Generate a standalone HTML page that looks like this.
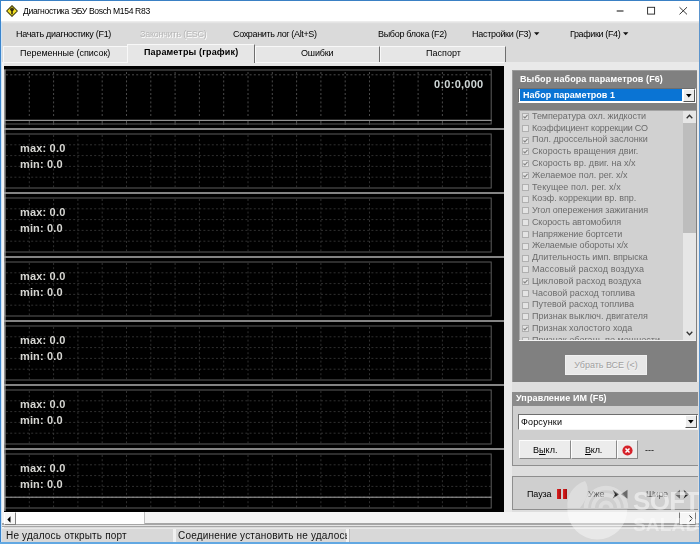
<!DOCTYPE html><html lang="ru"><head><meta charset="utf-8"><title>Диагностика ЭБУ Bosch M154 R83</title><style>
*{box-sizing:border-box;margin:0;padding:0}
html,body{width:700px;height:544px;overflow:hidden;background:#dadada}
body{position:relative;font-family:"Liberation Sans",sans-serif;font-size:9px;color:#000}
.a{position:absolute;white-space:nowrap}
.t{position:absolute;white-space:nowrap;line-height:1;will-change:transform}
#titlebar{left:0;top:0;width:700px;height:21px;background:#fff}
#title{left:23px;top:6.7px;font-size:8.6px}
.menu{top:30px;font-size:9px;color:#000}
.dis{color:#b8b8b8;text-shadow:0.7px 0.7px 0 #fff}
.tab span,.btn span{will-change:transform;display:inline-block}
.tab{top:46px;height:16px;border-top:1px solid #f8f8f8;border-left:1px solid #f8f8f8;border-right:1px solid #6e6e6e;background:#e6e6e6;text-align:center;font-size:9px;line-height:12.6px;color:#000}
.tab.sel{top:44px;height:19px;font-weight:bold;line-height:14px;z-index:2}
#chart{left:4px;top:66px;width:500px;height:446px;background:#000}
.mm{font-weight:bold;font-size:11px;color:#d6d6d2}
#rp1{left:512px;top:70.4px;width:185px;height:312.1px;background:#808080;border-left:1px solid #9c9c9c;border-top:1px solid #9a9a9a}
#rp2{left:512px;top:392px;width:186px;height:74.3px;background:#cfcfcf;border:1px solid #8e8e8e;border-right:0}
#rp3{left:512px;top:475.8px;width:186px;height:34.4px;background:#cfcfcf;border:1px solid #8e8e8e;border-right:0}
.hd{font-weight:bold;color:#fff;font-size:9px}
.li{color:#6c6c6c;font-size:9px}
.cb{width:7px;height:7px;background:#e4e4e4;border:1px solid #b0b0b0}
.btn{background:#ececec;border:1px solid #fdfdfd;border-right-color:#8a8a8a;border-bottom-color:#8a8a8a;text-align:center;font-size:9px}
</style></head><body>
<div class="a" id="titlebar"></div>
<div class="a" style="left:0;top:21px;width:700px;height:3px;background:linear-gradient(#f0f0f0,#d8d8d8)"></div>
<svg class="a" style="left:5.9px;top:4.6px" width="12" height="12" viewBox="0 0 13 13"><polygon points="6.5,0.7 12.3,6.5 6.5,12.3 0.7,6.5" fill="#f2e024" stroke="#3a3408" stroke-width="1.1"/><circle cx="6.5" cy="4.6" r="2" fill="#2a2408"/><circle cx="6.5" cy="4.2" r="0.7" fill="#6a5a10"/><rect x="5.7" y="5.5" width="1.6" height="4.6" fill="#2a2408"/></svg>
<div class="t" id="title" style="letter-spacing:-0.360px;">Диагностика ЭБУ Bosch M154 R83</div>
<svg class="a" style="left:600px;top:0" width="100" height="22" viewBox="0 0 100 22"><g stroke="#222" stroke-width="0.9" fill="none"><line x1="16.7" y1="11" x2="23.5" y2="11" stroke-width="1.1"/><rect x="47.6" y="7.3" width="7" height="6.8"/><line x1="79.5" y1="7.2" x2="87" y2="14.4"/><line x1="87" y1="7.2" x2="79.5" y2="14.4"/></g></svg>
<div class="t menu " id="m1" style="left:16.4px;letter-spacing:-0.296px;">Начать диагностику (F1)</div>
<div class="t menu dis" id="m2" style="left:140px;letter-spacing:-0.227px;">Закончить (ESC)</div>
<div class="t menu " id="m3" style="left:233.4px;letter-spacing:-0.357px;">Сохранить лог (Alt+S)</div>
<div class="t menu " id="m4" style="left:377.7px;letter-spacing:-0.300px;">Выбор блока (F2)</div>
<div class="t menu " id="m5" style="left:472px;letter-spacing:-0.293px;">Настройки (F3)</div>
<div class="t menu " id="m6" style="left:569.7px;letter-spacing:-0.375px;">Графики (F4)</div>
<svg class="a" style="left:533.5px;top:32px" width="6" height="4"><polygon points="0,0.3 5.4,0.3 2.7,3.3" fill="#111"/></svg>
<svg class="a" style="left:622.6px;top:32px" width="6" height="4"><polygon points="0,0.3 5.4,0.3 2.7,3.3" fill="#111"/></svg>
<div class="a" style="left:3px;top:62px;width:504px;height:4px;background:#e6e6e6;border-top:1px solid #f8f8f8"></div>
<div class="a tab" style="left:3px;width:124px;border-right:0"><span id="t1" style="letter-spacing:-0.011px;">Переменные (список)</span></div>
<div class="a tab sel" style="left:127px;width:128px"><span id="t2" style="letter-spacing:0.139px;">Параметры (график)</span></div>
<div class="a tab" style="left:255px;width:125px"><span id="t3" style="letter-spacing:-0.150px;">Ошибки</span></div>
<div class="a tab" style="left:380px;width:126px"><span id="t4" style="letter-spacing:0.029px;">Паспорт</span></div>
<div class="a" style="left:504px;top:62px;width:196px;height:450px;background:#e9e9e9"></div><div class="a" style="left:512px;top:382px;width:188px;height:130px;background:#dedede"></div>
<div class="a" style="left:1px;top:62px;width:3px;height:466px;background:#f4f4f4"></div>
<svg class="a" id="chart" width="500" height="446" viewBox="4 66 500 446"><rect x="4" y="66" width="500" height="446" fill="#000"/><g fill="none" stroke-width="1"><rect x="4.6" y="70" width="486.6" height="54" stroke="#5c5c5c"/><line x1="29.3" y1="72" x2="29.3" y2="118" stroke="#525252" stroke-width="0.9" stroke-dasharray="2 2.2"/><line x1="29.3" y1="121" x2="29.3" y2="125" stroke="#505050"/><line x1="53.6" y1="72" x2="53.6" y2="118" stroke="#525252" stroke-width="0.9" stroke-dasharray="2 2.2"/><line x1="53.6" y1="121" x2="53.6" y2="125" stroke="#505050"/><line x1="77.9" y1="72" x2="77.9" y2="118" stroke="#525252" stroke-width="0.9" stroke-dasharray="2 2.2"/><line x1="77.9" y1="121" x2="77.9" y2="125" stroke="#505050"/><line x1="102.2" y1="72" x2="102.2" y2="118" stroke="#525252" stroke-width="0.9" stroke-dasharray="2 2.2"/><line x1="102.2" y1="121" x2="102.2" y2="125" stroke="#505050"/><line x1="126.5" y1="72" x2="126.5" y2="118" stroke="#525252" stroke-width="0.9" stroke-dasharray="2 2.2"/><line x1="126.5" y1="121" x2="126.5" y2="125" stroke="#505050"/><line x1="150.8" y1="72" x2="150.8" y2="118" stroke="#525252" stroke-width="0.9" stroke-dasharray="2 2.2"/><line x1="150.8" y1="121" x2="150.8" y2="125" stroke="#505050"/><line x1="175.1" y1="72" x2="175.1" y2="118" stroke="#525252" stroke-width="0.9" stroke-dasharray="2 2.2"/><line x1="175.1" y1="121" x2="175.1" y2="125" stroke="#505050"/><line x1="199.4" y1="72" x2="199.4" y2="118" stroke="#525252" stroke-width="0.9" stroke-dasharray="2 2.2"/><line x1="199.4" y1="121" x2="199.4" y2="125" stroke="#505050"/><line x1="223.7" y1="72" x2="223.7" y2="118" stroke="#525252" stroke-width="0.9" stroke-dasharray="2 2.2"/><line x1="223.7" y1="121" x2="223.7" y2="125" stroke="#505050"/><line x1="248.0" y1="72" x2="248.0" y2="118" stroke="#525252" stroke-width="0.9" stroke-dasharray="2 2.2"/><line x1="248.0" y1="121" x2="248.0" y2="125" stroke="#505050"/><line x1="272.3" y1="72" x2="272.3" y2="118" stroke="#525252" stroke-width="0.9" stroke-dasharray="2 2.2"/><line x1="272.3" y1="121" x2="272.3" y2="125" stroke="#505050"/><line x1="296.6" y1="72" x2="296.6" y2="118" stroke="#525252" stroke-width="0.9" stroke-dasharray="2 2.2"/><line x1="296.6" y1="121" x2="296.6" y2="125" stroke="#505050"/><line x1="320.9" y1="72" x2="320.9" y2="118" stroke="#525252" stroke-width="0.9" stroke-dasharray="2 2.2"/><line x1="320.9" y1="121" x2="320.9" y2="125" stroke="#505050"/><line x1="345.2" y1="72" x2="345.2" y2="118" stroke="#525252" stroke-width="0.9" stroke-dasharray="2 2.2"/><line x1="345.2" y1="121" x2="345.2" y2="125" stroke="#505050"/><line x1="369.5" y1="72" x2="369.5" y2="118" stroke="#525252" stroke-width="0.9" stroke-dasharray="2 2.2"/><line x1="369.5" y1="121" x2="369.5" y2="125" stroke="#505050"/><line x1="393.8" y1="72" x2="393.8" y2="118" stroke="#525252" stroke-width="0.9" stroke-dasharray="2 2.2"/><line x1="393.8" y1="121" x2="393.8" y2="125" stroke="#505050"/><line x1="418.1" y1="72" x2="418.1" y2="118" stroke="#525252" stroke-width="0.9" stroke-dasharray="2 2.2"/><line x1="418.1" y1="121" x2="418.1" y2="125" stroke="#505050"/><line x1="442.4" y1="72" x2="442.4" y2="118" stroke="#525252" stroke-width="0.9" stroke-dasharray="2 2.2"/><line x1="442.4" y1="121" x2="442.4" y2="125" stroke="#505050"/><line x1="466.7" y1="72" x2="466.7" y2="118" stroke="#525252" stroke-width="0.9" stroke-dasharray="2 2.2"/><line x1="466.7" y1="121" x2="466.7" y2="125" stroke="#505050"/><line x1="6" y1="74.8" x2="491" y2="74.8" stroke="#525252" stroke-width="0.9" stroke-dasharray="2 2.2"/><line x1="4" y1="120.3" x2="491.5" y2="120.3" stroke="#b4b4b4"/><line x1="4" y1="128.9" x2="504" y2="128.9" stroke="#b0b0b0" stroke-width="1.5"/><rect x="4.6" y="134.0" width="486.6" height="54" stroke="#5c5c5c"/><line x1="29.3" y1="135.0" x2="29.3" y2="188.0" stroke="#3c3c3c" stroke-width="0.8" stroke-dasharray="2 2.2"/><line x1="53.6" y1="135.0" x2="53.6" y2="188.0" stroke="#3c3c3c" stroke-width="0.8" stroke-dasharray="2 2.2"/><line x1="77.9" y1="135.0" x2="77.9" y2="188.0" stroke="#3c3c3c" stroke-width="0.8" stroke-dasharray="2 2.2"/><line x1="102.2" y1="135.0" x2="102.2" y2="188.0" stroke="#3c3c3c" stroke-width="0.8" stroke-dasharray="2 2.2"/><line x1="126.5" y1="135.0" x2="126.5" y2="188.0" stroke="#3c3c3c" stroke-width="0.8" stroke-dasharray="2 2.2"/><line x1="150.8" y1="135.0" x2="150.8" y2="188.0" stroke="#3c3c3c" stroke-width="0.8" stroke-dasharray="2 2.2"/><line x1="175.1" y1="135.0" x2="175.1" y2="188.0" stroke="#3c3c3c" stroke-width="0.8" stroke-dasharray="2 2.2"/><line x1="199.4" y1="135.0" x2="199.4" y2="188.0" stroke="#3c3c3c" stroke-width="0.8" stroke-dasharray="2 2.2"/><line x1="223.7" y1="135.0" x2="223.7" y2="188.0" stroke="#3c3c3c" stroke-width="0.8" stroke-dasharray="2 2.2"/><line x1="248.0" y1="135.0" x2="248.0" y2="188.0" stroke="#3c3c3c" stroke-width="0.8" stroke-dasharray="2 2.2"/><line x1="272.3" y1="135.0" x2="272.3" y2="188.0" stroke="#3c3c3c" stroke-width="0.8" stroke-dasharray="2 2.2"/><line x1="296.6" y1="135.0" x2="296.6" y2="188.0" stroke="#3c3c3c" stroke-width="0.8" stroke-dasharray="2 2.2"/><line x1="320.9" y1="135.0" x2="320.9" y2="188.0" stroke="#3c3c3c" stroke-width="0.8" stroke-dasharray="2 2.2"/><line x1="345.2" y1="135.0" x2="345.2" y2="188.0" stroke="#3c3c3c" stroke-width="0.8" stroke-dasharray="2 2.2"/><line x1="369.5" y1="135.0" x2="369.5" y2="188.0" stroke="#3c3c3c" stroke-width="0.8" stroke-dasharray="2 2.2"/><line x1="393.8" y1="135.0" x2="393.8" y2="188.0" stroke="#3c3c3c" stroke-width="0.8" stroke-dasharray="2 2.2"/><line x1="418.1" y1="135.0" x2="418.1" y2="188.0" stroke="#3c3c3c" stroke-width="0.8" stroke-dasharray="2 2.2"/><line x1="442.4" y1="135.0" x2="442.4" y2="188.0" stroke="#3c3c3c" stroke-width="0.8" stroke-dasharray="2 2.2"/><line x1="466.7" y1="135.0" x2="466.7" y2="188.0" stroke="#3c3c3c" stroke-width="0.8" stroke-dasharray="2 2.2"/><line x1="6" y1="144.8" x2="491" y2="144.8" stroke="#3c3c3c" stroke-width="0.8" stroke-dasharray="2 2.2"/><line x1="6" y1="155.6" x2="491" y2="155.6" stroke="#3c3c3c" stroke-width="0.8" stroke-dasharray="2 2.2"/><line x1="6" y1="166.4" x2="491" y2="166.4" stroke="#3c3c3c" stroke-width="0.8" stroke-dasharray="2 2.2"/><line x1="6" y1="177.2" x2="491" y2="177.2" stroke="#3c3c3c" stroke-width="0.8" stroke-dasharray="2 2.2"/><line x1="4" y1="192.9" x2="504" y2="192.9" stroke="#b0b0b0" stroke-width="1.5"/><rect x="4.6" y="198.0" width="486.6" height="54" stroke="#5c5c5c"/><line x1="29.3" y1="199.0" x2="29.3" y2="252.0" stroke="#3c3c3c" stroke-width="0.8" stroke-dasharray="2 2.2"/><line x1="53.6" y1="199.0" x2="53.6" y2="252.0" stroke="#3c3c3c" stroke-width="0.8" stroke-dasharray="2 2.2"/><line x1="77.9" y1="199.0" x2="77.9" y2="252.0" stroke="#3c3c3c" stroke-width="0.8" stroke-dasharray="2 2.2"/><line x1="102.2" y1="199.0" x2="102.2" y2="252.0" stroke="#3c3c3c" stroke-width="0.8" stroke-dasharray="2 2.2"/><line x1="126.5" y1="199.0" x2="126.5" y2="252.0" stroke="#3c3c3c" stroke-width="0.8" stroke-dasharray="2 2.2"/><line x1="150.8" y1="199.0" x2="150.8" y2="252.0" stroke="#3c3c3c" stroke-width="0.8" stroke-dasharray="2 2.2"/><line x1="175.1" y1="199.0" x2="175.1" y2="252.0" stroke="#3c3c3c" stroke-width="0.8" stroke-dasharray="2 2.2"/><line x1="199.4" y1="199.0" x2="199.4" y2="252.0" stroke="#3c3c3c" stroke-width="0.8" stroke-dasharray="2 2.2"/><line x1="223.7" y1="199.0" x2="223.7" y2="252.0" stroke="#3c3c3c" stroke-width="0.8" stroke-dasharray="2 2.2"/><line x1="248.0" y1="199.0" x2="248.0" y2="252.0" stroke="#3c3c3c" stroke-width="0.8" stroke-dasharray="2 2.2"/><line x1="272.3" y1="199.0" x2="272.3" y2="252.0" stroke="#3c3c3c" stroke-width="0.8" stroke-dasharray="2 2.2"/><line x1="296.6" y1="199.0" x2="296.6" y2="252.0" stroke="#3c3c3c" stroke-width="0.8" stroke-dasharray="2 2.2"/><line x1="320.9" y1="199.0" x2="320.9" y2="252.0" stroke="#3c3c3c" stroke-width="0.8" stroke-dasharray="2 2.2"/><line x1="345.2" y1="199.0" x2="345.2" y2="252.0" stroke="#3c3c3c" stroke-width="0.8" stroke-dasharray="2 2.2"/><line x1="369.5" y1="199.0" x2="369.5" y2="252.0" stroke="#3c3c3c" stroke-width="0.8" stroke-dasharray="2 2.2"/><line x1="393.8" y1="199.0" x2="393.8" y2="252.0" stroke="#3c3c3c" stroke-width="0.8" stroke-dasharray="2 2.2"/><line x1="418.1" y1="199.0" x2="418.1" y2="252.0" stroke="#3c3c3c" stroke-width="0.8" stroke-dasharray="2 2.2"/><line x1="442.4" y1="199.0" x2="442.4" y2="252.0" stroke="#3c3c3c" stroke-width="0.8" stroke-dasharray="2 2.2"/><line x1="466.7" y1="199.0" x2="466.7" y2="252.0" stroke="#3c3c3c" stroke-width="0.8" stroke-dasharray="2 2.2"/><line x1="6" y1="208.8" x2="491" y2="208.8" stroke="#3c3c3c" stroke-width="0.8" stroke-dasharray="2 2.2"/><line x1="6" y1="219.6" x2="491" y2="219.6" stroke="#3c3c3c" stroke-width="0.8" stroke-dasharray="2 2.2"/><line x1="6" y1="230.4" x2="491" y2="230.4" stroke="#3c3c3c" stroke-width="0.8" stroke-dasharray="2 2.2"/><line x1="6" y1="241.2" x2="491" y2="241.2" stroke="#3c3c3c" stroke-width="0.8" stroke-dasharray="2 2.2"/><line x1="4" y1="256.9" x2="504" y2="256.9" stroke="#b0b0b0" stroke-width="1.5"/><rect x="4.6" y="262.0" width="486.6" height="54" stroke="#5c5c5c"/><line x1="29.3" y1="263.0" x2="29.3" y2="316.0" stroke="#3c3c3c" stroke-width="0.8" stroke-dasharray="2 2.2"/><line x1="53.6" y1="263.0" x2="53.6" y2="316.0" stroke="#3c3c3c" stroke-width="0.8" stroke-dasharray="2 2.2"/><line x1="77.9" y1="263.0" x2="77.9" y2="316.0" stroke="#3c3c3c" stroke-width="0.8" stroke-dasharray="2 2.2"/><line x1="102.2" y1="263.0" x2="102.2" y2="316.0" stroke="#3c3c3c" stroke-width="0.8" stroke-dasharray="2 2.2"/><line x1="126.5" y1="263.0" x2="126.5" y2="316.0" stroke="#3c3c3c" stroke-width="0.8" stroke-dasharray="2 2.2"/><line x1="150.8" y1="263.0" x2="150.8" y2="316.0" stroke="#3c3c3c" stroke-width="0.8" stroke-dasharray="2 2.2"/><line x1="175.1" y1="263.0" x2="175.1" y2="316.0" stroke="#3c3c3c" stroke-width="0.8" stroke-dasharray="2 2.2"/><line x1="199.4" y1="263.0" x2="199.4" y2="316.0" stroke="#3c3c3c" stroke-width="0.8" stroke-dasharray="2 2.2"/><line x1="223.7" y1="263.0" x2="223.7" y2="316.0" stroke="#3c3c3c" stroke-width="0.8" stroke-dasharray="2 2.2"/><line x1="248.0" y1="263.0" x2="248.0" y2="316.0" stroke="#3c3c3c" stroke-width="0.8" stroke-dasharray="2 2.2"/><line x1="272.3" y1="263.0" x2="272.3" y2="316.0" stroke="#3c3c3c" stroke-width="0.8" stroke-dasharray="2 2.2"/><line x1="296.6" y1="263.0" x2="296.6" y2="316.0" stroke="#3c3c3c" stroke-width="0.8" stroke-dasharray="2 2.2"/><line x1="320.9" y1="263.0" x2="320.9" y2="316.0" stroke="#3c3c3c" stroke-width="0.8" stroke-dasharray="2 2.2"/><line x1="345.2" y1="263.0" x2="345.2" y2="316.0" stroke="#3c3c3c" stroke-width="0.8" stroke-dasharray="2 2.2"/><line x1="369.5" y1="263.0" x2="369.5" y2="316.0" stroke="#3c3c3c" stroke-width="0.8" stroke-dasharray="2 2.2"/><line x1="393.8" y1="263.0" x2="393.8" y2="316.0" stroke="#3c3c3c" stroke-width="0.8" stroke-dasharray="2 2.2"/><line x1="418.1" y1="263.0" x2="418.1" y2="316.0" stroke="#3c3c3c" stroke-width="0.8" stroke-dasharray="2 2.2"/><line x1="442.4" y1="263.0" x2="442.4" y2="316.0" stroke="#3c3c3c" stroke-width="0.8" stroke-dasharray="2 2.2"/><line x1="466.7" y1="263.0" x2="466.7" y2="316.0" stroke="#3c3c3c" stroke-width="0.8" stroke-dasharray="2 2.2"/><line x1="6" y1="272.8" x2="491" y2="272.8" stroke="#3c3c3c" stroke-width="0.8" stroke-dasharray="2 2.2"/><line x1="6" y1="283.6" x2="491" y2="283.6" stroke="#3c3c3c" stroke-width="0.8" stroke-dasharray="2 2.2"/><line x1="6" y1="294.4" x2="491" y2="294.4" stroke="#3c3c3c" stroke-width="0.8" stroke-dasharray="2 2.2"/><line x1="6" y1="305.2" x2="491" y2="305.2" stroke="#3c3c3c" stroke-width="0.8" stroke-dasharray="2 2.2"/><line x1="4" y1="320.9" x2="504" y2="320.9" stroke="#b0b0b0" stroke-width="1.5"/><rect x="4.6" y="326.0" width="486.6" height="54" stroke="#5c5c5c"/><line x1="29.3" y1="327.0" x2="29.3" y2="380.0" stroke="#3c3c3c" stroke-width="0.8" stroke-dasharray="2 2.2"/><line x1="53.6" y1="327.0" x2="53.6" y2="380.0" stroke="#3c3c3c" stroke-width="0.8" stroke-dasharray="2 2.2"/><line x1="77.9" y1="327.0" x2="77.9" y2="380.0" stroke="#3c3c3c" stroke-width="0.8" stroke-dasharray="2 2.2"/><line x1="102.2" y1="327.0" x2="102.2" y2="380.0" stroke="#3c3c3c" stroke-width="0.8" stroke-dasharray="2 2.2"/><line x1="126.5" y1="327.0" x2="126.5" y2="380.0" stroke="#3c3c3c" stroke-width="0.8" stroke-dasharray="2 2.2"/><line x1="150.8" y1="327.0" x2="150.8" y2="380.0" stroke="#3c3c3c" stroke-width="0.8" stroke-dasharray="2 2.2"/><line x1="175.1" y1="327.0" x2="175.1" y2="380.0" stroke="#3c3c3c" stroke-width="0.8" stroke-dasharray="2 2.2"/><line x1="199.4" y1="327.0" x2="199.4" y2="380.0" stroke="#3c3c3c" stroke-width="0.8" stroke-dasharray="2 2.2"/><line x1="223.7" y1="327.0" x2="223.7" y2="380.0" stroke="#3c3c3c" stroke-width="0.8" stroke-dasharray="2 2.2"/><line x1="248.0" y1="327.0" x2="248.0" y2="380.0" stroke="#3c3c3c" stroke-width="0.8" stroke-dasharray="2 2.2"/><line x1="272.3" y1="327.0" x2="272.3" y2="380.0" stroke="#3c3c3c" stroke-width="0.8" stroke-dasharray="2 2.2"/><line x1="296.6" y1="327.0" x2="296.6" y2="380.0" stroke="#3c3c3c" stroke-width="0.8" stroke-dasharray="2 2.2"/><line x1="320.9" y1="327.0" x2="320.9" y2="380.0" stroke="#3c3c3c" stroke-width="0.8" stroke-dasharray="2 2.2"/><line x1="345.2" y1="327.0" x2="345.2" y2="380.0" stroke="#3c3c3c" stroke-width="0.8" stroke-dasharray="2 2.2"/><line x1="369.5" y1="327.0" x2="369.5" y2="380.0" stroke="#3c3c3c" stroke-width="0.8" stroke-dasharray="2 2.2"/><line x1="393.8" y1="327.0" x2="393.8" y2="380.0" stroke="#3c3c3c" stroke-width="0.8" stroke-dasharray="2 2.2"/><line x1="418.1" y1="327.0" x2="418.1" y2="380.0" stroke="#3c3c3c" stroke-width="0.8" stroke-dasharray="2 2.2"/><line x1="442.4" y1="327.0" x2="442.4" y2="380.0" stroke="#3c3c3c" stroke-width="0.8" stroke-dasharray="2 2.2"/><line x1="466.7" y1="327.0" x2="466.7" y2="380.0" stroke="#3c3c3c" stroke-width="0.8" stroke-dasharray="2 2.2"/><line x1="6" y1="336.8" x2="491" y2="336.8" stroke="#3c3c3c" stroke-width="0.8" stroke-dasharray="2 2.2"/><line x1="6" y1="347.6" x2="491" y2="347.6" stroke="#3c3c3c" stroke-width="0.8" stroke-dasharray="2 2.2"/><line x1="6" y1="358.4" x2="491" y2="358.4" stroke="#3c3c3c" stroke-width="0.8" stroke-dasharray="2 2.2"/><line x1="6" y1="369.2" x2="491" y2="369.2" stroke="#3c3c3c" stroke-width="0.8" stroke-dasharray="2 2.2"/><line x1="4" y1="384.9" x2="504" y2="384.9" stroke="#b0b0b0" stroke-width="1.5"/><rect x="4.6" y="390.0" width="486.6" height="54" stroke="#5c5c5c"/><line x1="29.3" y1="391.0" x2="29.3" y2="444.0" stroke="#3c3c3c" stroke-width="0.8" stroke-dasharray="2 2.2"/><line x1="53.6" y1="391.0" x2="53.6" y2="444.0" stroke="#3c3c3c" stroke-width="0.8" stroke-dasharray="2 2.2"/><line x1="77.9" y1="391.0" x2="77.9" y2="444.0" stroke="#3c3c3c" stroke-width="0.8" stroke-dasharray="2 2.2"/><line x1="102.2" y1="391.0" x2="102.2" y2="444.0" stroke="#3c3c3c" stroke-width="0.8" stroke-dasharray="2 2.2"/><line x1="126.5" y1="391.0" x2="126.5" y2="444.0" stroke="#3c3c3c" stroke-width="0.8" stroke-dasharray="2 2.2"/><line x1="150.8" y1="391.0" x2="150.8" y2="444.0" stroke="#3c3c3c" stroke-width="0.8" stroke-dasharray="2 2.2"/><line x1="175.1" y1="391.0" x2="175.1" y2="444.0" stroke="#3c3c3c" stroke-width="0.8" stroke-dasharray="2 2.2"/><line x1="199.4" y1="391.0" x2="199.4" y2="444.0" stroke="#3c3c3c" stroke-width="0.8" stroke-dasharray="2 2.2"/><line x1="223.7" y1="391.0" x2="223.7" y2="444.0" stroke="#3c3c3c" stroke-width="0.8" stroke-dasharray="2 2.2"/><line x1="248.0" y1="391.0" x2="248.0" y2="444.0" stroke="#3c3c3c" stroke-width="0.8" stroke-dasharray="2 2.2"/><line x1="272.3" y1="391.0" x2="272.3" y2="444.0" stroke="#3c3c3c" stroke-width="0.8" stroke-dasharray="2 2.2"/><line x1="296.6" y1="391.0" x2="296.6" y2="444.0" stroke="#3c3c3c" stroke-width="0.8" stroke-dasharray="2 2.2"/><line x1="320.9" y1="391.0" x2="320.9" y2="444.0" stroke="#3c3c3c" stroke-width="0.8" stroke-dasharray="2 2.2"/><line x1="345.2" y1="391.0" x2="345.2" y2="444.0" stroke="#3c3c3c" stroke-width="0.8" stroke-dasharray="2 2.2"/><line x1="369.5" y1="391.0" x2="369.5" y2="444.0" stroke="#3c3c3c" stroke-width="0.8" stroke-dasharray="2 2.2"/><line x1="393.8" y1="391.0" x2="393.8" y2="444.0" stroke="#3c3c3c" stroke-width="0.8" stroke-dasharray="2 2.2"/><line x1="418.1" y1="391.0" x2="418.1" y2="444.0" stroke="#3c3c3c" stroke-width="0.8" stroke-dasharray="2 2.2"/><line x1="442.4" y1="391.0" x2="442.4" y2="444.0" stroke="#3c3c3c" stroke-width="0.8" stroke-dasharray="2 2.2"/><line x1="466.7" y1="391.0" x2="466.7" y2="444.0" stroke="#3c3c3c" stroke-width="0.8" stroke-dasharray="2 2.2"/><line x1="6" y1="400.8" x2="491" y2="400.8" stroke="#3c3c3c" stroke-width="0.8" stroke-dasharray="2 2.2"/><line x1="6" y1="411.6" x2="491" y2="411.6" stroke="#3c3c3c" stroke-width="0.8" stroke-dasharray="2 2.2"/><line x1="6" y1="422.4" x2="491" y2="422.4" stroke="#3c3c3c" stroke-width="0.8" stroke-dasharray="2 2.2"/><line x1="6" y1="433.2" x2="491" y2="433.2" stroke="#3c3c3c" stroke-width="0.8" stroke-dasharray="2 2.2"/><line x1="4" y1="448.9" x2="504" y2="448.9" stroke="#b0b0b0" stroke-width="1.5"/><rect x="4.6" y="454.0" width="486.6" height="54" stroke="#5c5c5c"/><line x1="29.3" y1="455.0" x2="29.3" y2="508.0" stroke="#3c3c3c" stroke-width="0.8" stroke-dasharray="2 2.2"/><line x1="53.6" y1="455.0" x2="53.6" y2="508.0" stroke="#3c3c3c" stroke-width="0.8" stroke-dasharray="2 2.2"/><line x1="77.9" y1="455.0" x2="77.9" y2="508.0" stroke="#3c3c3c" stroke-width="0.8" stroke-dasharray="2 2.2"/><line x1="102.2" y1="455.0" x2="102.2" y2="508.0" stroke="#3c3c3c" stroke-width="0.8" stroke-dasharray="2 2.2"/><line x1="126.5" y1="455.0" x2="126.5" y2="508.0" stroke="#3c3c3c" stroke-width="0.8" stroke-dasharray="2 2.2"/><line x1="150.8" y1="455.0" x2="150.8" y2="508.0" stroke="#3c3c3c" stroke-width="0.8" stroke-dasharray="2 2.2"/><line x1="175.1" y1="455.0" x2="175.1" y2="508.0" stroke="#3c3c3c" stroke-width="0.8" stroke-dasharray="2 2.2"/><line x1="199.4" y1="455.0" x2="199.4" y2="508.0" stroke="#3c3c3c" stroke-width="0.8" stroke-dasharray="2 2.2"/><line x1="223.7" y1="455.0" x2="223.7" y2="508.0" stroke="#3c3c3c" stroke-width="0.8" stroke-dasharray="2 2.2"/><line x1="248.0" y1="455.0" x2="248.0" y2="508.0" stroke="#3c3c3c" stroke-width="0.8" stroke-dasharray="2 2.2"/><line x1="272.3" y1="455.0" x2="272.3" y2="508.0" stroke="#3c3c3c" stroke-width="0.8" stroke-dasharray="2 2.2"/><line x1="296.6" y1="455.0" x2="296.6" y2="508.0" stroke="#3c3c3c" stroke-width="0.8" stroke-dasharray="2 2.2"/><line x1="320.9" y1="455.0" x2="320.9" y2="508.0" stroke="#3c3c3c" stroke-width="0.8" stroke-dasharray="2 2.2"/><line x1="345.2" y1="455.0" x2="345.2" y2="508.0" stroke="#3c3c3c" stroke-width="0.8" stroke-dasharray="2 2.2"/><line x1="369.5" y1="455.0" x2="369.5" y2="508.0" stroke="#3c3c3c" stroke-width="0.8" stroke-dasharray="2 2.2"/><line x1="393.8" y1="455.0" x2="393.8" y2="508.0" stroke="#3c3c3c" stroke-width="0.8" stroke-dasharray="2 2.2"/><line x1="418.1" y1="455.0" x2="418.1" y2="508.0" stroke="#3c3c3c" stroke-width="0.8" stroke-dasharray="2 2.2"/><line x1="442.4" y1="455.0" x2="442.4" y2="508.0" stroke="#3c3c3c" stroke-width="0.8" stroke-dasharray="2 2.2"/><line x1="466.7" y1="455.0" x2="466.7" y2="508.0" stroke="#3c3c3c" stroke-width="0.8" stroke-dasharray="2 2.2"/><line x1="6" y1="464.8" x2="491" y2="464.8" stroke="#3c3c3c" stroke-width="0.8" stroke-dasharray="2 2.2"/><line x1="6" y1="475.6" x2="491" y2="475.6" stroke="#3c3c3c" stroke-width="0.8" stroke-dasharray="2 2.2"/><line x1="6" y1="486.4" x2="491" y2="486.4" stroke="#3c3c3c" stroke-width="0.8" stroke-dasharray="2 2.2"/><line x1="6" y1="497.2" x2="491" y2="497.2" stroke="#3c3c3c" stroke-width="0.8" stroke-dasharray="2 2.2"/><line x1="4.9" y1="69.5" x2="4.9" y2="511" stroke="#a4a4a4" stroke-width="1.3"/><line x1="4" y1="497.2" x2="491.5" y2="497.2" stroke="#a8a8a8"/></g></svg>
<div class="t" id="time" style="left:433.5px;top:78.7px;font-weight:bold;font-size:11px;color:#d0d8d8;letter-spacing:0.267px;">0:0:0,000</div>
<div class="t mm" id="mx" style="left:19.9px;top:143px;letter-spacing:0.175px;">max: 0.0</div>
<div class="t mm" id="mn" style="left:19.9px;top:159px;letter-spacing:0.138px;">min: 0.0</div>
<div class="t mm"  style="left:19.9px;top:207px;letter-spacing:0.175px;">max: 0.0</div>
<div class="t mm"  style="left:19.9px;top:223px;letter-spacing:0.138px;">min: 0.0</div>
<div class="t mm"  style="left:19.9px;top:271px;letter-spacing:0.175px;">max: 0.0</div>
<div class="t mm"  style="left:19.9px;top:287px;letter-spacing:0.138px;">min: 0.0</div>
<div class="t mm"  style="left:19.9px;top:335px;letter-spacing:0.175px;">max: 0.0</div>
<div class="t mm"  style="left:19.9px;top:351px;letter-spacing:0.138px;">min: 0.0</div>
<div class="t mm"  style="left:19.9px;top:399px;letter-spacing:0.175px;">max: 0.0</div>
<div class="t mm"  style="left:19.9px;top:415px;letter-spacing:0.138px;">min: 0.0</div>
<div class="t mm"  style="left:19.9px;top:463px;letter-spacing:0.175px;">max: 0.0</div>
<div class="t mm"  style="left:19.9px;top:479px;letter-spacing:0.138px;">min: 0.0</div>
<div class="a" id="rp1"></div>
<div class="t hd" id="h1" style="left:520px;top:75px;letter-spacing:0.100px;">Выбор набора параметров (F6)</div>
<div class="a" style="left:518px;top:88px;width:178px;height:15px;background:#fff;border:1px solid #6e6e6e;border-bottom-color:#fff;border-right-color:#fff"></div>
<div class="a" style="left:520px;top:89.3px;width:162px;height:12px;background:#0a74d4"></div>
<div class="t" id="c1" style="left:523px;top:91px;font-weight:bold;color:#fff;font-size:9px;letter-spacing:0.028px;">Набор параметров 1</div>
<div class="a" style="left:682.5px;top:89.3px;width:12px;height:12.5px;background:#ececec;border:1px solid #fff;border-right-color:#555;border-bottom-color:#555"></div>
<svg class="a" style="left:685.5px;top:94px" width="6" height="4"><polygon points="0,0 5.6,0 2.8,3.4" fill="#000"/></svg>
<div class="a" style="left:519px;top:110px;width:177px;height:230px;background:#d1d1d1;border:1px solid #a4a4a4;border-right:0;border-bottom:0"></div>
<div class="a" style="left:683px;top:111px;width:13px;height:229px;background:#e6e6e6"></div>
<div class="a" style="left:683px;top:123px;width:13px;height:110px;background:#bdbdbd"></div>
<svg class="a" style="left:686px;top:114px" width="8" height="5"><polyline points="0.7,4.2 3.5,1.2 6.3,4.2" fill="none" stroke="#333" stroke-width="1.3"/></svg>
<svg class="a" style="left:686px;top:331px" width="8" height="5"><polyline points="0.7,0.8 3.5,3.8 6.3,0.8" fill="none" stroke="#333" stroke-width="1.3"/></svg>
<div class="a" style="left:520px;top:111px;width:163px;height:229px;overflow:hidden">
<div class="a cb" style="left:1.8px;top:2.1px"></div>
<svg class="a" style="left:1.8px;top:2.1px" width="7" height="7"><polyline points="1.5,3.5 2.9,5 5.5,1.9" fill="none" stroke="#808080" stroke-width="1.1"/></svg>
<div class="t li" id="li0" style="left:12px;top:0.8px;letter-spacing:-0.068px;">Температура охл. жидкости</div>
<div class="a cb" style="left:1.8px;top:13.9px"></div>
<div class="t li" id="li1" style="left:12px;top:12.6px;letter-spacing:-0.196px;">Коэффициент коррекции СО</div>
<div class="a cb" style="left:1.8px;top:25.7px"></div>
<svg class="a" style="left:1.8px;top:25.7px" width="7" height="7"><polyline points="1.5,3.5 2.9,5 5.5,1.9" fill="none" stroke="#808080" stroke-width="1.1"/></svg>
<div class="t li" id="li2" style="left:12px;top:24.4px;letter-spacing:-0.004px;">Пол. дроссельной заслонки</div>
<div class="a cb" style="left:1.8px;top:37.4px"></div>
<svg class="a" style="left:1.8px;top:37.4px" width="7" height="7"><polyline points="1.5,3.5 2.9,5 5.5,1.9" fill="none" stroke="#808080" stroke-width="1.1"/></svg>
<div class="t li" id="li3" style="left:12px;top:36.1px;letter-spacing:0.030px;">Скорость вращения двиг.</div>
<div class="a cb" style="left:1.8px;top:49.2px"></div>
<svg class="a" style="left:1.8px;top:49.2px" width="7" height="7"><polyline points="1.5,3.5 2.9,5 5.5,1.9" fill="none" stroke="#808080" stroke-width="1.1"/></svg>
<div class="t li" id="li4" style="left:12px;top:47.9px;letter-spacing:0.052px;">Скорость вр. двиг. на х/х</div>
<div class="a cb" style="left:1.8px;top:61.0px"></div>
<svg class="a" style="left:1.8px;top:61.0px" width="7" height="7"><polyline points="1.5,3.5 2.9,5 5.5,1.9" fill="none" stroke="#808080" stroke-width="1.1"/></svg>
<div class="t li" id="li5" style="left:12px;top:59.7px;letter-spacing:0.000px;">Желаемое пол. рег. х/х</div>
<div class="a cb" style="left:1.8px;top:72.8px"></div>
<div class="t li" id="li6" style="left:12px;top:71.5px;letter-spacing:0.086px;">Текущее пол. рег. х/х</div>
<div class="a cb" style="left:1.8px;top:84.6px"></div>
<div class="t li" id="li7" style="left:12px;top:83.3px;letter-spacing:-0.029px;">Коэф. коррекции вр. впр.</div>
<div class="a cb" style="left:1.8px;top:96.3px"></div>
<div class="t li" id="li8" style="left:12px;top:95.0px;letter-spacing:-0.052px;">Угол опережения зажигания</div>
<div class="a cb" style="left:1.8px;top:108.1px"></div>
<div class="t li" id="li9" style="left:12px;top:106.8px;letter-spacing:-0.132px;">Скорость автомобиля</div>
<div class="a cb" style="left:1.8px;top:119.9px"></div>
<div class="t li" id="li10" style="left:12px;top:118.6px;letter-spacing:-0.100px;">Напряжение бортсети</div>
<div class="a cb" style="left:1.8px;top:131.7px"></div>
<div class="t li" id="li11" style="left:12px;top:130.4px;letter-spacing:-0.095px;">Желаемые обороты х/х</div>
<div class="a cb" style="left:1.8px;top:143.5px"></div>
<div class="t li" id="li12" style="left:12px;top:142.2px;letter-spacing:-0.036px;">Длительность имп. впрыска</div>
<div class="a cb" style="left:1.8px;top:155.2px"></div>
<div class="t li" id="li13" style="left:12px;top:153.9px;letter-spacing:0.113px;">Массовый расход воздуха</div>
<div class="a cb" style="left:1.8px;top:167.0px"></div>
<svg class="a" style="left:1.8px;top:167.0px" width="7" height="7"><polyline points="1.5,3.5 2.9,5 5.5,1.9" fill="none" stroke="#808080" stroke-width="1.1"/></svg>
<div class="t li" id="li14" style="left:12px;top:165.7px;letter-spacing:0.087px;">Цикловой расход воздуха</div>
<div class="a cb" style="left:1.8px;top:178.8px"></div>
<div class="t li" id="li15" style="left:12px;top:177.5px;letter-spacing:-0.009px;">Часовой расход топлива</div>
<div class="a cb" style="left:1.8px;top:190.6px"></div>
<div class="t li" id="li16" style="left:12px;top:189.3px;letter-spacing:-0.027px;">Путевой расход топлива</div>
<div class="a cb" style="left:1.8px;top:202.4px"></div>
<div class="t li" id="li17" style="left:12px;top:201.1px;letter-spacing:0.008px;">Признак выключ. двигателя</div>
<div class="a cb" style="left:1.8px;top:214.1px"></div>
<svg class="a" style="left:1.8px;top:214.1px" width="7" height="7"><polyline points="1.5,3.5 2.9,5 5.5,1.9" fill="none" stroke="#808080" stroke-width="1.1"/></svg>
<div class="t li" id="li18" style="left:12px;top:212.8px;letter-spacing:0.009px;">Признак холостого хода</div>
<div class="a cb" style="left:1.8px;top:225.9px"></div>
<div class="t li" id="li19" style="left:12px;top:224.6px;letter-spacing:0.026px;">Признак обогащ. по мощности</div>
</div>
<div class="a" style="left:519px;top:339.6px;width:177px;height:1.2px;background:#f2f2f2"></div>
<div class="a" style="left:565px;top:355px;width:82px;height:19.5px;background:#e8e8e8;border:1px solid #f0f0f0;text-align:center;line-height:18.6px;font-size:9px;color:#a0a0a0;text-shadow:0.6px 0.6px 0 #f4f4f4"><span id="b1" style="letter-spacing:-0.029px;">Убрать ВСЕ (&lt;)</span></div>
<div class="a" id="rp2"></div>
<div class="a" style="left:512px;top:392.3px;width:186px;height:14.2px;background:#8a8a8a"></div>
<div class="t hd" id="h2" style="left:516px;top:394.2px;letter-spacing:0.111px;">Управление ИМ (F5)</div>
<div class="a" style="left:518px;top:414px;width:180px;height:16px;background:#fff;border:1px solid #6e6e6e;border-bottom-color:#f4f4f4;border-right:0"></div>
<div class="t" id="c2" style="left:521px;top:417.5px;font-size:9px;letter-spacing:0.163px;">Форсунки</div>
<div class="a" style="left:684.5px;top:415.3px;width:12.5px;height:13px;background:#ececec;border:1px solid #fff;border-right-color:#555;border-bottom-color:#555"></div>
<svg class="a" style="left:688px;top:420px" width="6" height="4"><polygon points="0,0 5.6,0 2.8,3.4" fill="#000"/></svg>
<div class="a btn" style="left:519px;top:440.4px;width:51.5px;height:18.6px;line-height:18px"><span id="b2" style="letter-spacing:0.040px;">В<u>ы</u>кл.</span></div>
<div class="a btn" style="left:570.5px;top:440.4px;width:46px;height:18.6px;line-height:18px"><span id="b3" style="letter-spacing:-0.150px;"><u>В</u>кл.</span></div>
<div class="a btn" style="left:616.5px;top:440.4px;width:21.5px;height:18.6px"></div>
<svg class="a" style="left:622px;top:445px" width="11" height="11" viewBox="0 0 11 11"><circle cx="5.5" cy="5.5" r="5.1" fill="#d6222a"/><path d="M3.5 3.5 L7.5 7.5 M7.5 3.5 L3.5 7.5" stroke="#fff" stroke-width="1.5" fill="none"/></svg>
<div class="t" style="left:645px;top:446px;font-size:9px">---</div>
<div class="a" id="rp3"></div>
<div class="t" id="p1" style="left:527.3px;top:489.9px;font-size:9px;letter-spacing:-0.100px;">Пауза</div>
<div class="a" style="left:557.4px;top:488.6px;width:3.8px;height:10.3px;background:linear-gradient(90deg,#e02020,#a00c0c)"></div>
<div class="a" style="left:563px;top:488.6px;width:3.8px;height:10.3px;background:linear-gradient(90deg,#e02020,#a00c0c)"></div>
<div class="t" id="p2" style="left:588px;top:489.9px;font-size:9px;color:#5a5a5a;letter-spacing:0.067px;">Уже</div>
<svg class="a" style="left:612px;top:488.5px" width="16" height="11"><polygon points="0.5,0.8 7,5.3 0.5,9.8 3,5.3" fill="#2a2a2a"/><polygon points="15.5,0.8 9,5.3 15.5,9.8" fill="#6a6a6a"/></svg>
<div class="t" id="p3" style="left:645.7px;top:489.9px;font-size:9px;color:#5a5a5a;letter-spacing:-0.400px;">Шире</div>
<svg class="a" style="left:674px;top:488.5px" width="16" height="11"><polygon points="6,0.8 0.5,5.3 6,9.8" fill="#6a6a6a"/><polygon points="9.5,0.8 15,5.3 9.5,9.8 11.5,5.3" fill="#2a2a2a"/></svg>
<div class="a" style="left:1px;top:511.5px;width:698px;height:13px;background:#f3f3f3"></div>
<div class="a" style="left:1px;top:523.3px;width:698px;height:1.5px;background:#a6a6a6"></div>
<div class="a" style="left:1px;top:524.8px;width:698px;height:1.4px;background:#e6e6e6"></div>
<div class="a" style="left:1px;top:526.1px;width:698px;height:1.4px;background:#a6a6a6"></div>
<div class="a" style="left:1px;top:527.5px;width:698px;height:1.5px;background:#e8e8e8"></div>
<div class="a" style="left:4px;top:512.4px;width:11.6px;height:12.2px;background:#f6f6f6;border:1px solid #fff;border-right-color:#808080;border-bottom-color:#808080"></div>
<svg class="a" style="left:7px;top:515.5px" width="4" height="7"><polygon points="3.5,0.3 0.3,3.5 3.5,6.7" fill="#000"/></svg>
<div class="a" style="left:15.6px;top:512.4px;width:129px;height:11.4px;background:#fefefe;border-right:1px solid #c0c0c0"></div>
<div class="a" style="left:679px;top:512.4px;width:17px;height:12.2px;background:#f6f6f6;border:1px solid #fff;border-left-color:#787878;border-right-color:#808080;border-bottom-color:#808080"></div>
<svg class="a" style="left:688.8px;top:515.1px" width="4" height="7"><polyline points="0.5,0.5 3.3,3.5 0.5,6.5" fill="none" stroke="#222" stroke-width="1"/></svg>
<div class="a" style="left:1px;top:529px;width:698px;height:13px;background:#d8d8d8"></div>
<div class="a" style="left:173.2px;top:528.5px;width:2.4px;height:13.5px;background:#f0f0f0"></div>
<div class="a" style="left:346.2px;top:528.5px;width:2.6px;height:13.5px;background:#f0f0f0"></div><div class="a" style="left:348.8px;top:529px;width:0.8px;height:13px;background:#bbb"></div>
<div class="t" id="s1" style="left:6.2px;top:531.4px;font-size:10px;color:#111;letter-spacing:0.183px;">Не удалось открыть порт</div>
<div class="a" style="left:176px;top:528px;width:170.5px;height:14px;overflow:hidden"><div class="t" id="s2" style="left:1.5px;top:3.4px;font-size:10px;color:#111;letter-spacing:0.183px;">Соединение установить не удалось</div></div>
<svg class="a" style="left:560px;top:474px" width="140" height="70" viewBox="560 474 140 70"><path d="M567.3 509.5 A30 30 0 0 0 627.3 509.5 Z" fill="rgba(255,255,255,0.42)"/><path d="M567.5 508 C566 496 573 485 585 481 C590 488 588 498 580 508 Z" fill="rgba(255,255,255,0.3)"/><g fill="none" stroke="rgba(255,255,255,0.3)"><path d="M586 508 A20 20 0 0 1 626 508" stroke-width="4.5"/><path d="M593 508 A13 13 0 0 1 619 508" stroke-width="4"/><path d="M600.5 508 A5.5 5.5 0 0 1 611.5 508" stroke-width="4"/></g></svg>
<div class="t" id="wm1" style="left:632.5px;top:488px;font-size:26px;font-weight:bold;color:rgba(255,255,255,0.5);letter-spacing:-0.700px;">SOFT</div>
<div class="t" id="wm2" style="left:632.5px;top:514.7px;font-size:19px;font-weight:bold;color:rgba(255,255,255,0.42);letter-spacing:0.200px;">SALAD</div>
<div class="a" style="left:0;top:0;width:700px;height:1px;background:#3a80c4"></div>
<div class="a" style="left:0;top:0;width:1.1px;height:544px;background:#3a84cc"></div><div class="a" style="left:1.2px;top:22px;width:1px;height:520px;background:#cfe4f6"></div>
<div class="a" style="left:698.9px;top:0;width:1.1px;height:544px;background:#5b94cc"></div>
<div class="a" style="left:0;top:541.8px;width:700px;height:2.2px;background:#62a8e2"></div>
</body></html>
